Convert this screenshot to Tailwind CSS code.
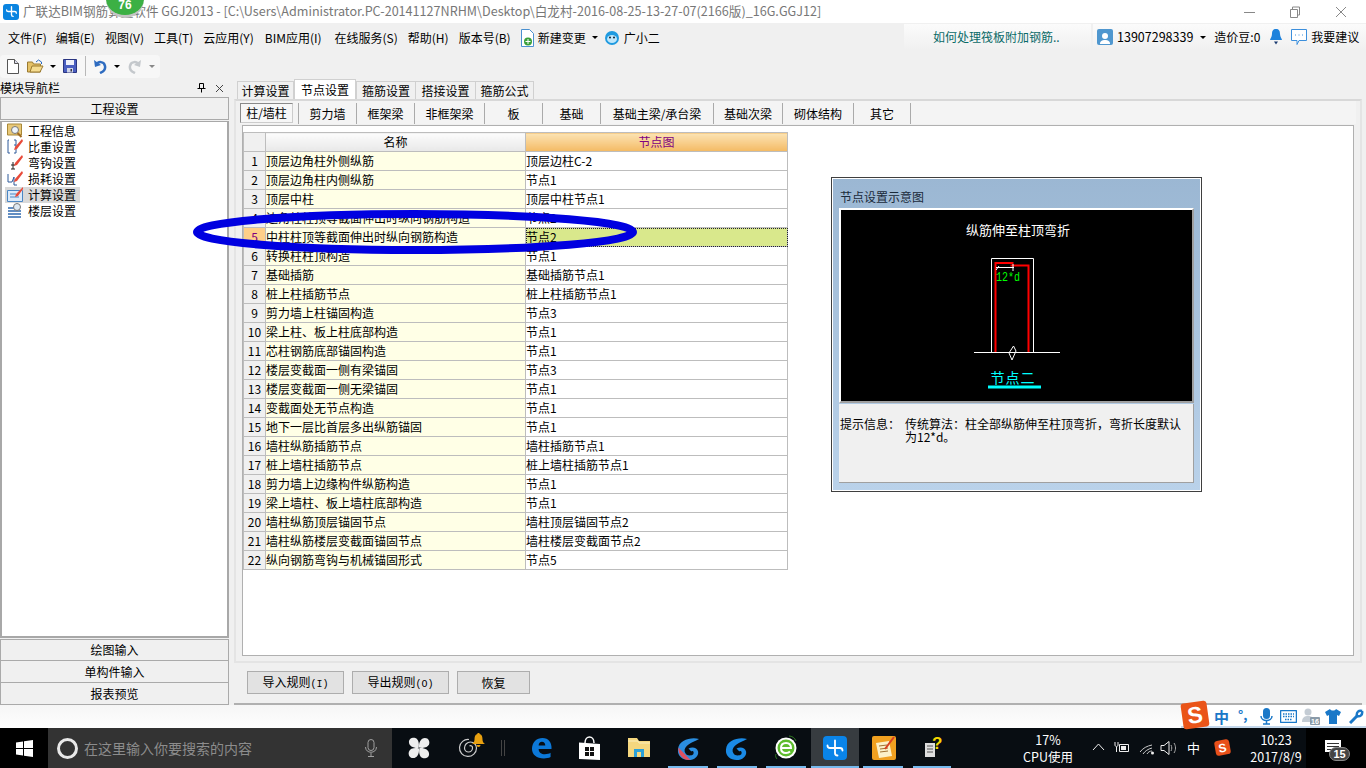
<!DOCTYPE html>
<html lang="zh-CN">
<head>
  <meta charset="UTF-8">
  <title>GGJ2013</title>
  <script src="https://cdn.jsdelivr.net/npm/@tailwindcss/browser@4"></script>
</head>
<body class="relative w-[1366px] h-[768px] overflow-hidden bg-[#f0f0f0] text-[12px] leading-none text-black font-['Noto_Sans_CJK_SC','Liberation_Sans',sans-serif]">

  <!-- Title bar -->
  <div class="h-[23px] bg-white flex items-center">
    <div class="w-[16px] h-[16px] ml-[3px] rounded-[3px] bg-[#0a84e0] flex items-center justify-center">
      <svg width="13" height="13" viewBox="0 0 24 24" fill="none" stroke="#fff" stroke-width="2.500" stroke-linecap="round"><path d="M12 3v15c0 2 1.500 3 3 3M3 9c0 2 1 3 3 3h12c2 0 3 1 3 3"/></svg>
    </div>
    <span class="ml-[4px] text-[12.600px] text-[#777] whitespace-nowrap">广联达BIM钢筋算量软件 GGJ2013 - [C:\Users\Administrator.PC-20141127NRHM\Desktop\白龙村-2016-08-25-13-27-07(2166版)_16G.GGJ12]</span>
    <div class="ml-auto flex items-center">
      <svg width="12" height="12" viewBox="0 0 12 12" class="mr-[33px]"><path d="M0 6.500h11" stroke="#888"/></svg>
      <svg width="12" height="12" viewBox="0 0 12 12" fill="none" stroke="#888" class="mr-[34px]"><path d="M1.500 3.500h7v8h-7zM3.500 3.500v-2.500h7v8h-2"/></svg>
      <svg width="12" height="12" viewBox="0 0 12 12" class="mr-[19px]"><path d="M1 1l10 10M11 1L1 11" stroke="#888"/></svg>
    </div>
  </div>

  <!-- Menu bar -->
  <div class="h-[29px] flex items-center pl-[8px] relative">
    <div class="flex items-center gap-[10px] whitespace-nowrap">
      <span>文件(F)</span><span class="-ml-px">编辑(E)</span><span>视图(V)</span><span>工具(T)</span><span>云应用(Y)</span><span class="ml-px">BIM应用(I)</span><span class="ml-[3px]">在线服务(S)</span><span>帮助(H)</span><span>版本号(B)</span>
    </div>
    <svg width="16" height="18" viewBox="0 0 16 18" class="ml-[8px]"><path d="M2.500 .5h8l4 4v13h-12z" fill="#fff" stroke="#4a90d0"/><circle cx="9" cy="12.500" r="4" fill="#3aa03a"/><path d="M9 10v5M6.500 12.500h5" stroke="#fff"/></svg>
    <span class="ml-[3px]">新建变更</span>
    <span class="ml-[6px] w-0 h-0 border-x-[3px] border-x-transparent border-t-[3px] border-t-black"></span>
    <svg width="16" height="16" viewBox="0 0 16 16" class="ml-[6px]"><circle cx="8" cy="8" r="7" fill="#1e9ae0"/><ellipse cx="8" cy="9" rx="5" ry="4" fill="#bfe6fa"/><circle cx="6" cy="7.500" r="1" fill="#123"/><circle cx="10" cy="7.500" r="1" fill="#123"/></svg>
    <span class="ml-[4px]">广小二</span>

    <div class="ml-auto flex items-center h-[26px] self-start mt-[1px]">
      <div class="w-[187px] h-full mr-[2px] bg-gradient-to-b from-[#fbfbfb] to-[#f0f0f0] text-[#0a6a68] pl-[29px] flex items-center">如何处理筏板附加钢筋..</div>
      <div class="w-[273px] h-full bg-gradient-to-b from-[#fbfbfb] to-[#f0f0f0] flex items-center pl-[4px]">
        <div class="w-[16px] h-[16px] rounded-[2px] bg-[#4f97cf] flex items-end justify-center">
          <svg width="12" height="14" viewBox="0 0 12 14"><circle cx="6" cy="5" r="3" fill="#fff"/><path d="M1 13c0-3 2-4 5-4s5 1 5 4z" fill="#fff"/></svg>
        </div>
        <span class="ml-[4px] text-[12.500px]">13907298339</span>
        <span class="ml-[7px] w-0 h-0 border-x-[3px] border-x-transparent border-t-[3px] border-t-black"></span>
        <span class="ml-[8px]">造价豆:0</span>
        <svg width="12" height="16" viewBox="0 0 12 16" class="ml-[10px]"><path d="M6 0c3 0 4 2 4 5 0 3 2 5 2 6H0c0-1 2-3 2-6 0-3 1-5 4-5z" fill="#1e82dc"/><path d="M4 12.500h4L6 15.500z" fill="#1a3a70"/></svg>
        <svg width="16" height="17" viewBox="0 0 16 17" fill="none" class="ml-[9px]"><path d="M.5 .5h15v11H8l-2 4v-4H.5z" stroke="#3c8fdc" fill="#fff"/><path d="M4 6h1M7.500 6h1M11 6h1" stroke="#3c8fdc"/></svg>
        <span class="ml-[4px]">我要建议</span>
      </div>
    </div>
  </div>

  <!-- Toolbar -->
  <div class="h-[28px] flex items-center">
    <div class="flex items-center h-[23px] pl-[7px] pr-[5px] bg-[#f7f7f7] rounded-[4px]">
      <svg width="12" height="15" viewBox="0 0 12 15"><path d="M.5 .5h7l4 4v10h-11z" fill="#fff" stroke="#555"/><path d="M7.500 .5v4h4" fill="#dde" stroke="#555"/></svg>
      <svg width="17" height="15" viewBox="0 0 17 15" class="ml-[8px]"><path d="M.5 3h5l1 2h7v8H.5z" fill="#e5c268" stroke="#9a7a30"/><path d="M3 13l2-6h11l-3 6z" fill="#f5dc90" stroke="#9a7a30"/><path d="M9 3l2.500-2 3 2M14.500 3v2" fill="none" stroke="#2a6ac0"/></svg>
      <span class="ml-[6px] w-0 h-0 border-x-[3px] border-x-transparent border-t-[3px] border-t-black"></span>
      <svg width="14" height="14" viewBox="0 0 14 14" class="ml-[7px]"><path d="M.5 .5h13v13H.5z" fill="#4a5ec0" stroke="#2a3580"/><path d="M3 1h8v5H3z" fill="#eef0fa"/><path d="M4 9h6v4.500H4z" fill="#d0d5e8"/><path d="M7.500 10h1.500v2.500H7.500z" fill="#334"/></svg>
      <div class="ml-[8px] w-px h-[20px] bg-[#b8b8b8]"></div>
      <svg width="14" height="15" viewBox="0 0 14 15" fill="none" class="ml-[7px]"><path d="M3 6c2-4 8-4 9 1s-3 6-5 7" stroke="#2f6cc0" stroke-width="2.500"/><path d="M1 1l1 7 6-2z" fill="#2f6cc0"/></svg>
      <span class="ml-[7px] w-0 h-0 border-x-[3px] border-x-transparent border-t-[3px] border-t-black"></span>
      <svg width="14" height="15" viewBox="0 0 14 15" fill="none" class="ml-[8px]"><path d="M11 6C9 2 3 2 2 7s3 6 5 7" stroke="#c4c8cc" stroke-width="2.500"/><path d="M13 1l-1 7-6-2z" fill="#c4c8cc"/></svg>
      <span class="ml-[7px] w-0 h-0 border-x-[3px] border-x-transparent border-t-[3px] border-t-[#888]"></span>
    </div>
  </div>

  <!-- Main area -->
  <div class="h-[625px] flex">
    <!-- Module navigator -->
    <div class="w-[229px] flex flex-col">
      <div class="h-[17px] flex items-center whitespace-nowrap">
        <span>模块导航栏</span>
        <svg width="9" height="10" viewBox="0 0 9 10" class="ml-auto"><path d="M2.500 .5h4v5h-4zM.5 5.500h8M4.500 5.500v4" fill="none" stroke="#000"/></svg>
        <svg width="9" height="9" viewBox="0 0 9 9" class="ml-[9px] mr-[5px]"><path d="M1 1l7 7M8 1L1 8" stroke="#444"/></svg>
      </div>
      <div class="h-[23px] border border-[#aaa] flex items-center justify-center pt-px">工程设置</div>
      <div class="h-[518px] bg-white border-2 border-[#a8a8a8] mt-px border-t pt-px pl-[3px]">
        <div class="h-[16px] pl-[2px] flex items-center">
          <svg width="16" height="15" viewBox="0 0 16 15"><path d="M.5 1h14v11H.5z" fill="#e8c878" stroke="#a88838"/><circle cx="8" cy="7" r="3.500" fill="#eef4fa" stroke="#777"/><path d="M10.500 10l4 4" stroke="#a06a20" stroke-width="2"/></svg>
          <span class="ml-[5px]">工程信息</span>
        </div>
        <div class="h-[16px] pl-[2px] flex items-center">
          <svg width="16" height="15" viewBox="0 0 16 15" fill="none"><path d="M2 1h-1v13h2M7 1h2v5H7M9 6v8H7" stroke="#2f5a9a"/><path d="M15 0L8 8l-1 3 3-1 6-8z" fill="#e84a3a"/></svg>
          <span class="ml-[5px]">比重设置</span>
        </div>
        <div class="h-[16px] pl-[2px] flex items-center">
          <svg width="16" height="15" viewBox="0 0 16 15" fill="none"><path d="M6 7v7M4 10h4M4 14h4" stroke="#222"/><path d="M15 0L8 8l-1 3 3-1 6-8z" fill="#e84a3a"/></svg>
          <span class="ml-[5px]">弯钩设置</span>
        </div>
        <div class="h-[16px] pl-[2px] flex items-center">
          <svg width="16" height="15" viewBox="0 0 16 15" fill="none"><path d="M1 3v8h4l2-5v8h3" stroke="#2f5a9a"/><path d="M15 0L8 8l-1 3 3-1 6-8z" fill="#e84a3a"/></svg>
          <span class="ml-[5px]">损耗设置</span>
        </div>
        <div class="h-[16px] w-[75px] pl-[2px] flex items-center bg-[#d9d9d9]">
          <svg width="16" height="15" viewBox="0 0 16 15" fill="none"><path d="M.5 3.500h15v11H.5z" fill="#dbeafa" stroke="#4a86c4"/><path d="M3 7h6M3 10h9" stroke="#4a86c4"/><path d="M16 0L9 7l-1 3 3-1 5-7z" fill="#e84a3a"/></svg>
          <span class="ml-[5px]">计算设置</span>
        </div>
        <div class="h-[16px] pl-[2px] flex items-center">
          <svg width="16" height="15" viewBox="0 0 16 15" fill="none"><path d="M1 5h12M1 8h13M1 11h13M1 14h13" stroke="#2f6ab0" stroke-width="1.600"/><circle cx="10" cy="4" r="3.500" fill="#dde8f2" stroke="#777"/></svg>
          <span class="ml-[5px]">楼层设置</span>
        </div>
      </div>
      <div class="mt-px h-[22px] border border-[#aaa] flex items-center justify-center">绘图输入</div>
      <div class="h-[22px] border border-t-0 border-[#aaa] flex items-center justify-center">单构件输入</div>
      <div class="h-[22px] border border-t-0 border-[#aaa] flex items-center justify-center">报表预览</div>
    </div>

    <!-- Settings pane -->
    <div class="ml-[5px] w-[1128px] flex flex-col">
      <div class="h-[19px] flex items-end pl-[3px]">
        <div class="w-[57px] h-[18px] border border-b-0 border-[#d0d0d0] flex items-center justify-center">计算设置</div>
        <div class="w-[62px] h-[20px] bg-white border border-b-0 border-[#d0d0d0] flex items-center justify-center">节点设置</div>
        <div class="w-[60px] h-[18px] border border-b-0 border-[#d0d0d0] flex items-center justify-center">箍筋设置</div>
        <div class="w-[60px] h-[18px] border border-b-0 border-l-0 border-[#d0d0d0] flex items-center justify-center">搭接设置</div>
        <div class="w-[58px] h-[18px] border border-b-0 border-l-0 border-[#d0d0d0] flex items-center justify-center">箍筋公式</div>
      </div>
      <div class="h-[564px] border-2 border-[#e4e4e4] border-t-[#d8d8d8] px-[6px] flex flex-col">
        <div class="h-[23px] flex items-stretch shrink-0 pt-[2px] -mx-[2px] bg-[#f4f4f4]">
          <div class="w-[53px] h-[20px] bg-[#f7f7f7] border border-[#8a8a8a] border-r-[#ccc] border-b-[#ccc] flex items-center justify-center">柱/墙柱</div>
          <div class="w-[58px] ml-[5px] border-l border-[#aaa] flex items-center justify-center">剪力墙</div>
          <div class="w-[58px] border-l border-[#aaa] flex items-center justify-center">框架梁</div>
          <div class="w-[70px] border-l border-[#aaa] flex items-center justify-center">非框架梁</div>
          <div class="w-[58px] border-l border-[#aaa] flex items-center justify-center">板</div>
          <div class="w-[58px] border-l border-[#aaa] flex items-center justify-center">基础</div>
          <div class="w-[113px] border-l border-[#aaa] flex items-center justify-center">基础主梁/承台梁</div>
          <div class="w-[69px] border-l border-[#aaa] flex items-center justify-center">基础次梁</div>
          <div class="w-[71px] border-l border-[#aaa] flex items-center justify-center">砌体结构</div>
          <div class="w-[57px] border-l border-[#aaa] flex items-center justify-center">其它</div>
          <div class="border-l border-[#aaa]"></div>
        </div>
        <div class="mt-[1px] h-[531px] bg-white border border-[#b0b0b0] pt-[6px]">
          <table class="border-collapse table-fixed w-[544px] [&_td]:border [&_td]:border-[#bdbdbd] [&_td]:h-[19px] [&_td]:p-0 [&_td]:whitespace-nowrap [&_td]:overflow-hidden">
            <colgroup><col class="w-[22px]"><col class="w-[260px]"><col class="w-[262px]"></colgroup>
            <tr>
              <td class="bg-[#f0f0f0]"></td>
              <td class="bg-gradient-to-b from-[#fcfcfc] to-[#e8e8e8] text-center">名称</td>
              <td class="bg-gradient-to-b from-[#fbe3b3] to-[#f4ba62] text-center text-[#800080]">节点图</td>
            </tr>
            <tr><td class="bg-[#f0f0f0] text-center">1</td><td class="bg-[#ffffe6] pl-px">顶层边角柱外侧纵筋</td><td class="pl-px">顶层边柱C-2</td></tr>
            <tr><td class="bg-[#f0f0f0] text-center">2</td><td class="bg-[#ffffe6] pl-px">顶层边角柱内侧纵筋</td><td class="pl-px">节点1</td></tr>
            <tr><td class="bg-[#f0f0f0] text-center">3</td><td class="bg-[#ffffe6] pl-px">顶层中柱</td><td class="pl-px">顶层中柱节点1</td></tr>
            <tr><td class="bg-[#f0f0f0] text-center">4</td><td class="bg-[#ffffe6] pl-px">边角柱柱顶等截面伸出时纵向钢筋构造</td><td class="pl-px">节点2</td></tr>
            <tr><td class="bg-[#ffcf88] text-center text-[#800080]">5</td><td class="bg-[#ffffe6] pl-px">中柱柱顶等截面伸出时纵向钢筋构造</td><td class="bg-[#d9e88c] pl-px outline-1 outline-dotted -outline-offset-1 outline-[#223]">节点2</td></tr>
            <tr><td class="bg-[#f0f0f0] text-center">6</td><td class="bg-[#ffffe6] pl-px">转换柱柱顶构造</td><td class="pl-px">节点1</td></tr>
            <tr><td class="bg-[#f0f0f0] text-center">7</td><td class="bg-[#ffffe6] pl-px">基础插筋</td><td class="pl-px">基础插筋节点1</td></tr>
            <tr><td class="bg-[#f0f0f0] text-center">8</td><td class="bg-[#ffffe6] pl-px">桩上柱插筋节点</td><td class="pl-px">桩上柱插筋节点1</td></tr>
            <tr><td class="bg-[#f0f0f0] text-center">9</td><td class="bg-[#ffffe6] pl-px">剪力墙上柱锚固构造</td><td class="pl-px">节点3</td></tr>
            <tr><td class="bg-[#f0f0f0] text-center">10</td><td class="bg-[#ffffe6] pl-px">梁上柱、板上柱底部构造</td><td class="pl-px">节点1</td></tr>
            <tr><td class="bg-[#f0f0f0] text-center">11</td><td class="bg-[#ffffe6] pl-px">芯柱钢筋底部锚固构造</td><td class="pl-px">节点1</td></tr>
            <tr><td class="bg-[#f0f0f0] text-center">12</td><td class="bg-[#ffffe6] pl-px">楼层变截面一侧有梁锚固</td><td class="pl-px">节点3</td></tr>
            <tr><td class="bg-[#f0f0f0] text-center">13</td><td class="bg-[#ffffe6] pl-px">楼层变截面一侧无梁锚固</td><td class="pl-px">节点1</td></tr>
            <tr><td class="bg-[#f0f0f0] text-center">14</td><td class="bg-[#ffffe6] pl-px">变截面处无节点构造</td><td class="pl-px">节点1</td></tr>
            <tr><td class="bg-[#f0f0f0] text-center">15</td><td class="bg-[#ffffe6] pl-px">地下一层比首层多出纵筋锚固</td><td class="pl-px">节点1</td></tr>
            <tr><td class="bg-[#f0f0f0] text-center">16</td><td class="bg-[#ffffe6] pl-px">墙柱纵筋插筋节点</td><td class="pl-px">墙柱插筋节点1</td></tr>
            <tr><td class="bg-[#f0f0f0] text-center">17</td><td class="bg-[#ffffe6] pl-px">桩上墙柱插筋节点</td><td class="pl-px">桩上墙柱插筋节点1</td></tr>
            <tr><td class="bg-[#f0f0f0] text-center">18</td><td class="bg-[#ffffe6] pl-px">剪力墙上边缘构件纵筋构造</td><td class="pl-px">节点1</td></tr>
            <tr><td class="bg-[#f0f0f0] text-center">19</td><td class="bg-[#ffffe6] pl-px">梁上墙柱、板上墙柱底部构造</td><td class="pl-px">节点1</td></tr>
            <tr><td class="bg-[#f0f0f0] text-center">20</td><td class="bg-[#ffffe6] pl-px">墙柱纵筋顶层锚固节点</td><td class="pl-px">墙柱顶层锚固节点2</td></tr>
            <tr><td class="bg-[#f0f0f0] text-center">21</td><td class="bg-[#ffffe6] pl-px">墙柱纵筋楼层变截面锚固节点</td><td class="pl-px">墙柱楼层变截面节点2</td></tr>
            <tr><td class="bg-[#f0f0f0] text-center">22</td><td class="bg-[#ffffe6] pl-px">纵向钢筋弯钩与机械锚固形式</td><td class="pl-px">节点5</td></tr>
          </table>
        </div>
      </div>
      <div class="h-[42px] border-b-2 border-[#b0b0b0] flex items-center pl-[13px] gap-[8px]">
        <button class="w-[97px] h-[23px] bg-[#e2e2e2] border border-[#adadad] -mt-[1px]">导入规则<span class="font-['Liberation_Mono',monospace] text-[10px]">(I)</span></button>
        <button class="w-[97px] h-[23px] bg-[#e2e2e2] border border-[#adadad] -mt-[1px]">导出规则<span class="font-['Liberation_Mono',monospace] text-[10px]">(O)</span></button>
        <button class="w-[73px] h-[23px] bg-[#e2e2e2] border border-[#adadad] -mt-[1px]">恢复</button>
      </div>
    </div>
  </div>

  <!-- Strip above taskbar -->
  <div class="h-[23px] bg-gradient-to-b from-[#f6f6f6] to-[#fefefe]"></div>

  <!-- Taskbar -->
  <div class="h-[40px] bg-[#080d12] text-white flex items-stretch relative">
    <div class="w-[48px] bg-black flex items-center justify-center">
      <svg width="17" height="17" viewBox="0 0 17 17" fill="#fff"><path d="M0 2.500l7-1v6.500H0zM8 1.300L17 0v8H8zM0 9h7v6.500l-7-1zM8 9h9v8l-9-1.300z"/></svg>
    </div>
    <div class="w-[344px] bg-[#333] flex items-center pl-[9px]">
      <div class="w-[21px] h-[21px] rounded-full border-[3px] border-[#e8e8e8]"></div>
      <span class="ml-[6px] text-[14px] text-[#8c8c8c]">在这里输入你要搜索的内容</span>
      <svg width="12" height="18" viewBox="0 0 12 18" fill="none" stroke="#a0a0a0" class="ml-[113px]"><rect x="3" y=".5" width="6" height="11" rx="3"/><path d="M.5 8c0 7 11 7 11 0M6 14v3M3 17.500h6"/></svg>
    </div>
    <div class="flex-1 relative">
      <!-- pinned apps -->
      <svg width="22" height="22" viewBox="0 0 24 24" fill="#eee" class="absolute left-[16px] top-[9px]">
        <path id="petal" d="M11.500 12C6 12.500 1 10 1 5.500 1 1.500 5 0 8 1c3.500 1.200 4.500 6 3.500 11z"/>
        <path d="M11.500 12C6 12.500 1 10 1 5.500 1 1.500 5 0 8 1c3.500 1.200 4.500 6 3.500 11z" transform="rotate(90 12 12)"/>
        <path d="M11.500 12C6 12.500 1 10 1 5.500 1 1.500 5 0 8 1c3.500 1.200 4.500 6 3.500 11z" transform="rotate(180 12 12)"/>
        <path d="M11.500 12C6 12.500 1 10 1 5.500 1 1.500 5 0 8 1c3.500 1.200 4.500 6 3.500 11z" transform="rotate(270 12 12)"/>
      </svg>
      <svg width="20" height="20" viewBox="0 0 20 20" fill="none" stroke="#ccc" stroke-width="1.200" class="absolute left-[66px] top-[10px]"><path d="M11 1.500A8.500 8.500 0 1 0 18.500 10a6 6 0 1 0-12 0 4 4 0 0 0 8 0 2 2 0 0 0-3-2"/></svg>
      <svg width="13" height="14" viewBox="0 0 13 14" fill="#e8a010" class="absolute left-[80px] top-[5px]"><path d="M6.500 0c1 0 1.200 .6 1.200 1C10 1.800 10.500 4 10.500 6.500c0 2 1 3.500 2.500 4.500H0c1.500-1 2.500-2.500 2.500-4.500C2.500 4 3 1.800 5.300 1c0-.4 .2-1 1.200-1z"/><path d="M4.500 12h4c0 1-1 2-2 2s-2-1-2-2z"/></svg>
      <div class="absolute left-[109px] top-[12px] w-[4px] h-[16px] border-x border-[#444]"></div>
      <svg width="21" height="22" viewBox="0 0 22 23" fill="#0c78d8" class="absolute left-[139px] top-[9px]"><path fill-rule="evenodd" d="M1 12C1.500 5 6 1 12 1c6.500 0 10 5 9.500 11.500H8c0 3.500 3 5.500 6.500 5.500 2.500 0 4.500-.5 6-1.500v4.500c-2 1-4.500 1.500-7 1.500C6 22.500 1 18.500 1 12zM8 9h7c0-2.500-1.500-4-3.500-4S8 6.500 8 9z"/></svg>
      <svg width="21" height="24" viewBox="0 0 21 24" class="absolute left-[187px] top-[8px]"><path d="M0 6.500l21 1.500v16L0 23z" fill="#fff"/><path d="M6 7c0-8 9-8 9 0" fill="none" stroke="#fff" stroke-width="1.500"/><path d="M6 11h4v4H6zM11 11h4v4h-4zM6 16h4v4H6zM11 16h4v4h-4z" fill="#111"/></svg>
      <svg width="22" height="19" viewBox="0 0 22 19" class="absolute left-[236px] top-[10px]"><path d="M0 0h9l2 3h11v16H0z" fill="#f5d77e"/><path d="M0 3h10l1 2h11" fill="none" stroke="#fbeebc"/><path d="M6 11h10v8H6z" fill="#2aa0d8"/><path d="M9 14h4v5H9z" fill="#f5d77e"/></svg>
      <svg width="23" height="23" viewBox="0 0 24 24" class="absolute left-[285px] top-[9px]"><path d="M23 2C14 0 2 3 1 13c-.7 7 5 11 11 11s11-4 10-9c-1-4-6-5-10-3l3 3c2-1 3 1 2 3-2 2-8 2-9-3C7 9 15 6 23 2z" fill="#2a8ee0"/><path d="M1.500 11L14 24c-6 .5-13-4-12.500-13z" fill="#e05060"/></svg>
      <svg width="23" height="23" viewBox="0 0 24 24" class="absolute left-[333px] top-[9px]"><path d="M23 2C14 0 2 3 1 13c-.7 7 5 11 11 11s11-4 10-9c-1-4-6-5-10-3l3 3c2-1 3 1 2 3-2 2-8 2-9-3C7 9 15 6 23 2z" fill="#1a8ae6"/></svg>
      <svg width="24" height="25" viewBox="0 0 24 25" fill="none" class="absolute left-[382px] top-[7px]"><circle cx="12" cy="13" r="10.500" fill="#fff"/><circle cx="12" cy="13" r="8.500" fill="#5ebc2e"/><path d="M7 13h10c0-3-2-5-5-5s-5 2-5 5 2 5 5 5c2 0 3-.5 4-1.500" stroke="#fff" stroke-width="2"/><path d="M3 24c-1-1-2-3-1-5M15 1c3 0 6 2 7 5" stroke="#2e7a20"/></svg>
      <div class="absolute left-[419px] top-0 w-[48px] h-[40px] bg-[#373c40] flex items-center justify-center">
        <div class="w-[24px] h-[24px] rounded-[4px] bg-[#0a84e8] flex items-center justify-center">
          <svg width="20" height="20" viewBox="0 0 24 24" fill="none" stroke="#fff" stroke-width="2.200" stroke-linecap="round"><path d="M12 3v15c0 2 1.500 3 3 3M3 9c0 2 1 3 3 3h12c2 0 3 1 3 3"/></svg>
        </div>
      </div>
      <svg width="24" height="24" viewBox="0 0 24 24" class="absolute left-[480px] top-[8px]"><rect width="24" height="24" rx="2" fill="#f0a020"/><path d="M4 7l13-2 3 15-13 2z" fill="#fbf0c8"/><path d="M7 10l8-1M8 13l8-1M8 16l8-1" stroke="#a07030"/><path d="M22 1l-9 12" stroke="#d84020" stroke-width="2"/></svg>
      <svg width="20" height="24" viewBox="0 0 20 24" class="absolute left-[532px] top-[7px]"><path d="M1 8h10v14H1z" fill="#ddd"/><path d="M3 11h6M3 14h6M3 17h6" stroke="#555"/><text x="8" y="14" font-size="17" font-weight="700" fill="#f5d800" font-family="Liberation Sans">?</text></svg>
      <!-- running app underlines -->
      <div class="absolute bottom-0 left-[276px] w-[40px] h-[2px] bg-[#76b9ed]"></div>
      <div class="absolute bottom-0 left-[325px] w-[40px] h-[2px] bg-[#76b9ed]"></div>
      <div class="absolute bottom-0 left-[374px] w-[40px] h-[2px] bg-[#76b9ed]"></div>
      <div class="absolute bottom-0 left-[419px] w-[48px] h-[2px] bg-[#76b9ed]"></div>
      <div class="absolute bottom-0 left-[471px] w-[40px] h-[2px] bg-[#76b9ed]"></div>
      <div class="absolute bottom-0 left-[521px] w-[38px] h-[2px] bg-[#76b9ed]"></div>
      <!-- tray -->
      <div class="absolute left-[626px] top-[3px] w-[60px] text-center text-[12.500px] leading-[17px] whitespace-nowrap">17%<br>CPU使用</div>
      <svg width="13" height="8" viewBox="0 0 13 8" fill="none" stroke="#eee" class="absolute left-[700px] top-[15px]"><path d="M1 7l5.500-6L12 7"/></svg>
      <svg width="16" height="13" viewBox="0 0 16 13" fill="none" class="absolute left-[722px] top-[13px]"><path d="M5.500 3.500h9v7h-9z" stroke="#eee"/><path d="M7 5h5v4H7z" fill="#eee"/><path d="M1 1v3c0 2 3 2 3 0V1M2.500 6v5" stroke="#eee"/></svg>
      <svg width="16" height="14" viewBox="0 0 16 14" fill="none" stroke="#ccc" class="absolute left-[747px] top-[13px]"><path d="M1 11c3-4 7-6 12-7M4 13c2-3 5-5 9-6M8 13c1-2 3-3 5-3"/><circle cx="13.500" cy="12" r="1.500" fill="#eee" stroke="none"/></svg>
      <svg width="17" height="14" viewBox="0 0 17 14" fill="none" stroke="#eee" class="absolute left-[768px] top-[13px]"><path d="M1 4.500h3l5-4v13l-5-4H1z"/><path d="M11 4c1 2 1 4 0 6M14 2c2 3 2 7 0 10" stroke="#aaa"/></svg>
      <span class="absolute left-[795px] top-[13px] text-[13px]">中</span>
      <div class="absolute left-[823px] top-[12px] w-[15px] h-[15px] rounded-[3px] rotate-[-10deg] bg-[#e8501a] flex items-center justify-center text-[12px] font-bold font-['Liberation_Sans',sans-serif]">S</div>
      <div class="absolute left-[854px] top-[3px] w-[60px] text-center text-[12.500px] leading-[17px] whitespace-nowrap">10:23<br>2017/8/9</div>
      <div class="absolute left-[914px] top-0 w-[60px] h-[40px] bg-black"></div>
      <div class="absolute left-[933px] top-[12px] w-[16px] h-[12px] bg-white flex flex-col justify-center gap-[2px] px-[2px]"><div class="h-px bg-[#333]"></div><div class="h-px bg-[#333]"></div><div class="h-px bg-[#333]"></div></div>
      <div class="absolute left-[937px] top-[19px] w-[21px] h-[14px] rounded-full bg-[#444] border border-[#888] text-[11px] font-bold flex items-center justify-center font-['Liberation_Sans',sans-serif]">15</div>
    </div>
  </div>

  <!-- Update score badge over the title bar -->
  <div class="absolute left-[106px] -top-[22px] w-[38px] h-[40px] rounded-full bg-[#3cb044] border-b-[3px] border-[#c4c4c4] flex items-end justify-center pb-[4px] text-white font-bold text-[12px] font-['Liberation_Sans',sans-serif]">76</div>

  <!-- Node diagram window -->
  <div class="absolute left-[831px] top-[177px] w-[371px] h-[315px] border border-[#3f3f3f] bg-gradient-to-b from-[#9bb7d3] to-[#bad2ea] px-[7px] shadow-[inset_0_0_0_1px_#fff]">
    <div class="h-[30px] flex items-center pt-[7px] pl-[1px] text-[#1a2a3a]">节点设置示意图</div>
    <div class="h-[195px] w-[355px] border-2 border-white border-r-[#a0a0a0] border-b-[#a0a0a0] bg-black">
      <svg width="351" height="192" viewBox="0 0 351 192" fill="none" class="block">
        <text x="177" y="25" fill="#fff" font-size="13" text-anchor="middle" font-family="Noto Sans CJK SC">纵筋伸至柱顶弯折</text>
        <path d="M150.500 142V48.500h42V142" stroke="#fff"/>
        <path d="M133 142.500h86" stroke="#fff"/>
        <path d="M154.500 142V53h18" stroke="#f00" stroke-width="2"/>
        <path d="M187.500 142V55.500h-18" stroke="#f00" stroke-width="2"/>
        <path d="M155 57.500h18M172 54v7M155 60l3-4" stroke="#fff"/>
        <text x="155" y="71" fill="#0f0" font-size="12" textLength="24" lengthAdjust="spacingAndGlyphs" font-family="Liberation Mono">12*d</text>
        <path d="M172.500 136L175 141l-4 9-3-7 4.500-7" stroke="#fff"/>
        <text x="172" y="173" fill="#0ff" font-size="14" text-anchor="middle" letter-spacing="1" font-family="Noto Sans CJK SC">节点二</text>
        <rect x="147" y="175.500" width="53" height="3" fill="#0ff"/>
      </svg>
    </div>
    <div class="mt-px h-[79px] w-[355px] bg-[#f0f0f0] border-b border-r border-[#a0a0a0] flex pt-[13px] pl-px leading-[13px]">
      <span class="w-[65px] shrink-0">提示信息：</span>
      <span class="w-[280px]">传统算法：柱全部纵筋伸至柱顶弯折，弯折长度默认为12*d。</span>
    </div>
  </div>

  <!-- Hand-drawn blue ellipse annotation -->
  <svg width="460" height="60" viewBox="0 0 460 60" fill="none" class="absolute left-[186px] top-[203px]">
    <ellipse cx="229" cy="29" rx="218" ry="18" stroke="#0000e0" stroke-width="8"/>
  </svg>

  <!-- IME status bar -->
  <div class="absolute left-[1181px] top-[705px] w-[185px] h-[23px] bg-white border-b-2 border-[#c4d8ec] flex items-center text-[#1a78c8]">
    <div class="absolute left-[1px] -top-[3px] w-[26px] h-[26px] rotate-[-8deg] rounded-[3px] bg-[#ea5418] text-white text-[23px] font-bold flex items-center justify-center font-['Liberation_Sans',sans-serif]">S</div>
    <span class="absolute left-[33px] top-[4px] text-[15px] font-bold">中</span>
    <span class="absolute left-[57px] top-[3px] text-[13px] font-bold">°,</span>
    <svg width="13" height="17" viewBox="0 0 13 17" class="absolute left-[79px] top-[3px]" fill="#1a78c8"><rect x="3" y="0" width="7" height="11" rx="3.500"/><path d="M1 8c0 6 11 6 11 0M6.500 13v3M3 16h7" fill="none" stroke="#1a78c8" stroke-width="1.500"/></svg>
    <svg width="17" height="13" viewBox="0 0 17 13" class="absolute left-[99px] top-[5px]" fill="none"><rect x=".5" y=".5" width="16" height="12" rx="1" stroke="#1a78c8" stroke-width="1.500"/><path d="M3 4h11M3 6.500h11M5 9.500h7" stroke="#1a78c8" stroke-dasharray="1.500 1" stroke-width="1.500"/></svg>
    <svg width="18" height="17" viewBox="0 0 18 17" class="absolute left-[121px] top-[3px]"><circle cx="6" cy="4" r="3.500" fill="#c4ccd4"/><path d="M0 14c0-5 3-6 6-6s6 1 6 6z" fill="#c4ccd4"/><rect x="8" y="9" width="10" height="8" rx="1" fill="#8a9aa8"/><text x="9" y="16" font-size="7" font-weight="700" fill="#fff" font-family="Liberation Sans">16</text></svg>
    <svg width="16" height="15" viewBox="0 0 16 15" class="absolute left-[144px] top-[4px]" fill="#1a78c8"><path d="M5 0L0 3l2 4 2-1v9h8V6l2 1 2-4-5-3c-1 2-5 2-6 0z"/></svg>
    <svg width="15" height="15" viewBox="0 0 15 15" class="absolute left-[168px] top-[4px]" fill="none" stroke="#1a78c8" stroke-width="3"><path d="M1 14l7-7"/><path d="M8 7c-1-4 2-6 5-5M8 7c3 1 6-1 5-5" stroke-width="2.500"/></svg>
  </div>

</body>
</html>
